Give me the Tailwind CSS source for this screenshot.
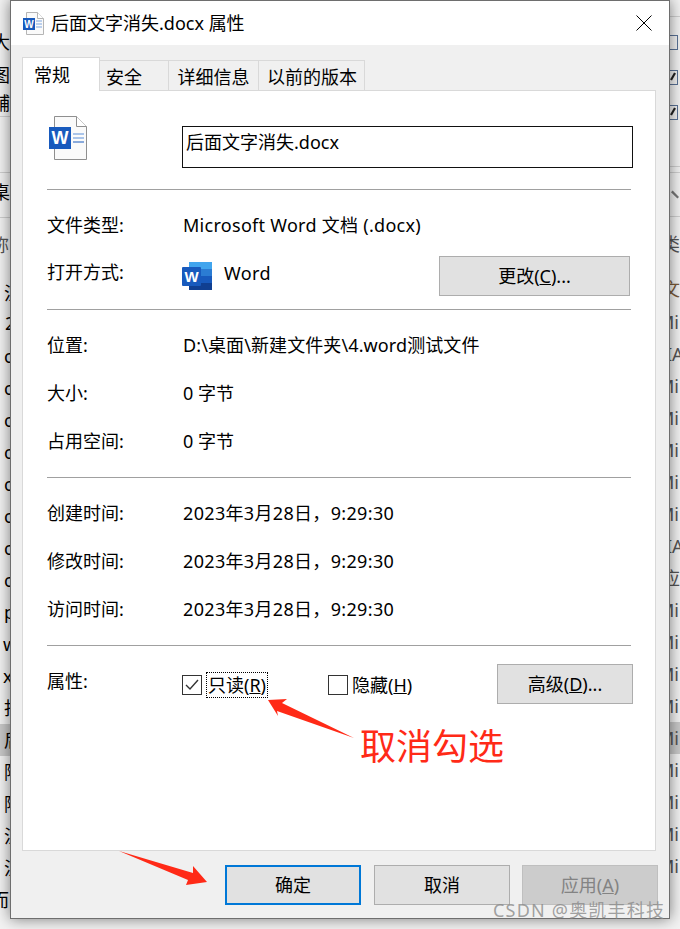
<!DOCTYPE html>
<html lang="zh-CN">
<head>
  <meta charset="UTF-8">
  <title>后面文字消失.docx 属性</title>
  <script src="https://cdn.jsdelivr.net/npm/@tailwindcss/browser@4"></script>
</head>
<body class="bg-[#f3f3f3]">
<div class="relative flex items-start w-[680px] h-[929px] overflow-hidden bg-[#f3f3f3] text-black text-[18px] leading-[24px] font-['Noto_Sans','Noto_Sans_CJK_SC',sans-serif]">

  <!-- window behind, left edge -->
  <div class="w-[10px] h-[929px] shrink-0 overflow-hidden flex flex-col whitespace-nowrap">
    <div class="h-[30px]"></div>
    <div class="h-[33px] -ml-[8px]">大</div>
    <div class="h-[28px] -ml-[8px]">图</div>
    <div class="h-[26px] -ml-[8px] border-b border-[#cfcfcf]">辅</div>
    <div class="h-[56px] border-b border-[#cfcfcf]"></div>
    <div class="h-[45px] -ml-[8px] pt-[7px] border-b border-[#cfcfcf]">桌</div>
    <div class="h-[63px] -ml-[9px] pt-[15px] text-[#555]">称</div>
    <div class="h-[30px] pl-[4px]">注</div>
    <div class="h-[29px] pl-[5px]">2</div>
    <div class="h-[32px] pl-[4px] pt-[4px]">c</div>
    <div class="h-[32px] pl-[4px] pt-[4px]">c</div>
    <div class="h-[32px] pl-[4px] pt-[4px]">c</div>
    <div class="h-[32px] pl-[4px] pt-[4px]">c</div>
    <div class="h-[32px] pl-[4px] pt-[4px]">c</div>
    <div class="h-[32px] pl-[4px] pt-[4px]">c</div>
    <div class="h-[32px] pl-[4px] pt-[4px]">c</div>
    <div class="h-[32px] pl-[4px] pt-[4px]">c</div>
    <div class="h-[32px] pl-[4px] pt-[4px]">p</div>
    <div class="h-[32px] pl-[3px] pt-[4px]">w</div>
    <div class="h-[32px] pl-[3px] pt-[4px]">x</div>
    <div class="h-[32px] pl-[4px] pt-[4px]">找</div>
    <div class="h-[32px] pl-[4px] pt-[4px] bg-[#c9c9c9]">后</div>
    <div class="h-[32px] pl-[4px] pt-[4px]">阿</div>
    <div class="h-[32px] pl-[4px] pt-[4px]">阿</div>
    <div class="h-[32px] pl-[4px] pt-[4px]">注</div>
    <div class="h-[32px] pl-[4px] pt-[4px]">注</div>
    <div class="h-[32px] -ml-[9px] pt-[4px]">而</div>
  </div>

  <!-- dialog -->
  <div class="relative z-10 w-[660px] h-[919px] shrink-0 flex flex-col border border-[#6e6e6e] bg-[#f0f0f0] shadow-[0_0_14px_rgba(0,0,0,0.5)]">
    <div class="h-[44px] shrink-0 bg-white flex items-center pl-[12px] pr-[17px]">
      <svg width="21" height="23" viewBox="0 0 21 23" class="mr-[7px]">
        <path d="M3.5 .5h11l6 6v16h-17z" fill="#fafafa" stroke="#b5b5b5"/>
        <path d="M14.5 .5v6h6" fill="#fff" stroke="#b5b5b5"/>
        <rect x="0" y="6" width="12" height="12" fill="#185abd"/>
        <text x="6" y="15.5" font-size="10" font-weight="700" fill="#fff" text-anchor="middle" font-family="Liberation Sans">W</text>
        <path d="M13 9h6M13 12h6M13 15h6" stroke="#7ea6e0"/>
      </svg>
      <span class="flex-1">后面文字消失.docx 属性</span>
      <svg width="16" height="16" viewBox="0 0 16 16"><path d="M.5.5l15 15M15.5.5l-15 15" stroke="#000" fill="none"/></svg>
    </div>

    <!-- tabs -->
    <div class="h-[45px] shrink-0 flex items-end pl-[11px]">
      <div class="relative z-10 h-[34px] -mb-[1px] w-[78px] bg-white border border-b-0 border-[#d9d9d9] pl-[11px] pt-[5px]">常规</div>
      <div class="h-[30px] w-[69px] bg-[#f0f0f0] border-t border-r border-[#d9d9d9] pl-[6px] pt-[4px]">安全</div>
      <div class="h-[30px] w-[90px] bg-[#f0f0f0] border-t border-r border-[#d9d9d9] text-center pt-[4px]">详细信息</div>
      <div class="h-[30px] w-[106px] bg-[#f0f0f0] border-t border-r border-[#d9d9d9] pl-[8px] pt-[4px]">以前的版本</div>
    </div>

    <!-- panel -->
    <div class="ml-[11px] w-[634px] h-[761px] shrink-0 bg-white border border-[#d9d9d9] px-[24px]">
      <div class="h-[98px] flex items-start">
        <svg width="40" height="45" viewBox="0 0 40 45" class="mt-[25px] ml-[2px] shrink-0">
          <path d="M5.5.5h22l10 10v33h-32z" fill="#fafafa" stroke="#8f8f8f"/>
          <path d="M27.5.5v10h10" fill="#fff" stroke="#8f8f8f"/>
          <rect x="0" y="11" width="22" height="22" fill="#185abd"/>
          <text x="11" y="28" font-size="18" font-weight="700" fill="#fff" text-anchor="middle" font-family="Liberation Sans">W</text>
          <path d="M24 18h11M24 22h11" stroke="#5b8fd9"/>
          <path d="M24 26h11" stroke="#185abd"/>
        </svg>
        <div class="ml-[93px] mt-[35px] w-[451px] h-[42px] shrink-0 border border-[#111] pl-[3px] pt-[3px]">后面文字消失.docx</div>
      </div>
      <div class="h-px bg-[#a0a0a0]"></div>

      <div class="pt-[11px] h-[119px]">
        <div class="h-[48px] flex items-center"><span class="w-[136px]">文件类型:</span><span class="tracking-[0.28px]">Microsoft Word 文档 (.docx)</span></div>
        <div class="h-[48px] flex items-center">
          <span class="w-[135px] -mt-[2px]">打开方式:</span>
          <svg width="30" height="28" viewBox="0 0 30 28" class="mr-[12px] mt-[6px]">
            <rect x="7" y="0" width="23" height="7" fill="#41a5ee"/>
            <rect x="7" y="7" width="23" height="7" fill="#2b7cd3"/>
            <rect x="7" y="14" width="23" height="7" fill="#185abd"/>
            <rect x="7" y="21" width="23" height="7" fill="#103f91"/>
            <rect x="0" y="5" width="19" height="19" rx="1" fill="#185abd"/>
            <text x="9.5" y="20" font-size="15" font-weight="700" fill="#fff" text-anchor="middle" font-family="Liberation Sans">W</text>
          </svg>
          <span class="flex-1 -mt-[1px] tracking-[0.4px]">Word</span>
          <div class="w-[191px] h-[40px] mr-[1px] mt-[6px] border border-[#adadad] bg-[#e1e1e1] flex items-center justify-center">更改(<u>C</u>)...</div>
        </div>
      </div>
      <div class="h-px bg-[#a0a0a0]"></div>

      <div class="pt-[11px] h-[167px]">
        <div class="h-[48px] flex items-center"><span class="w-[136px]">位置:</span><span class="tracking-[0.1px]">D:\桌面\新建文件夹\4.word测试文件</span></div>
        <div class="h-[48px] flex items-center"><span class="w-[136px]">大小:</span><span>0 字节</span></div>
        <div class="h-[48px] flex items-center"><span class="w-[136px]">占用空间:</span><span>0 字节</span></div>
      </div>
      <div class="h-px bg-[#a0a0a0]"></div>

      <div class="pt-[11px] h-[167px]">
        <div class="h-[48px] flex items-center"><span class="w-[136px]">创建时间:</span><span class="tracking-[0.33px]">2023年3月28日，9:29:30</span></div>
        <div class="h-[48px] flex items-center"><span class="w-[136px]">修改时间:</span><span class="tracking-[0.33px]">2023年3月28日，9:29:30</span></div>
        <div class="h-[48px] flex items-center"><span class="w-[136px]">访问时间:</span><span class="tracking-[0.33px]">2023年3月28日，9:29:30</span></div>
      </div>
      <div class="h-px bg-[#a0a0a0]"></div>

      <div class="flex items-start pt-[18px]">
        <span class="w-[135px] shrink-0 mt-[5px]">属性:</span>
        <div class="w-[20px] h-[20px] shrink-0 mt-[11px] border border-[#333] flex items-center justify-center">
          <svg width="14" height="12" viewBox="0 0 14 12"><path d="M1 6l4 4 8-9" stroke="#333" stroke-width="1.4" fill="none"/></svg>
        </div>
        <div class="ml-[4px] mt-[8px] w-[62px] h-[26px] shrink-0 outline-1 outline-dotted outline-black -outline-offset-1 flex items-center justify-center whitespace-nowrap">只读(<u>R</u>)</div>
        <div class="ml-[60px] w-[20px] h-[20px] mt-[11px] border border-[#333] shrink-0"></div>
        <div class="ml-[4px] mt-[9px] w-[145px] shrink-0 whitespace-nowrap">隐藏(<u>H</u>)</div>
        <div class="w-[136px] h-[40px] shrink-0 border border-[#adadad] bg-[#e1e1e1] flex items-center justify-center">高级(<u>D</u>)...</div>
      </div>
    </div>

    <!-- bottom buttons -->
    <div class="flex pl-[214px] gap-[13px] mt-[14px]">
      <div class="w-[136px] h-[40px] border-2 border-[#0078d7] bg-[#e1e1e1] flex items-center justify-center">确定</div>
      <div class="w-[136px] h-[40px] border border-[#adadad] bg-[#e1e1e1] flex items-center justify-center">取消</div>
      <div class="w-[136px] h-[40px] ml-[-1px] border border-[#bfbfbf] bg-[#cccccc] text-[#838383] flex items-center justify-center">应用(<u>A</u>)</div>
    </div>
  </div>

  <!-- window behind, right edge -->
  <div class="flex-1 h-[929px] overflow-hidden whitespace-nowrap flex flex-col text-[#555]">
    <div class="h-[17px] border-b border-[#d0d0d0]"></div>
    <div class="h-[18px]"></div>
    <div class="h-[15px] w-[8px] border border-l-0 border-[#5a7296]"></div>
    <div class="h-[20px]"></div>
    <div class="h-[15px] w-[8px] border border-l-0 border-[#5a7296]">
      <svg width="7" height="13" viewBox="0 0 7 13" class="block"><path d="M5 2L1 9" stroke="#222" stroke-width="2.2" fill="none"/></svg>
    </div>
    <div class="h-[20px]"></div>
    <div class="h-[15px] w-[8px] border border-l-0 border-[#5a7296]">
      <svg width="7" height="13" viewBox="0 0 7 13" class="block"><path d="M5 2L1 9" stroke="#222" stroke-width="2.2" fill="none"/></svg>
    </div>
    <div class="h-[47px] border-b border-[#d0d0d0]"></div>
    <div class="h-[6px] border-b border-[#d0d0d0]"></div>
    <div class="h-[44px] border-b border-[#d0d0d0] flex items-center">
      <svg width="11" height="12" viewBox="0 0 11 12"><path d="M2 2l7 7" stroke="#777" stroke-width="2.5" fill="none"/></svg>
    </div>
    <div class="h-[47px] pt-[15px] -ml-[8px]">类型</div>
    <div class="h-[37px] -ml-[8px] pt-[13px] text-[#7a5a3a]">文件</div>
    <div class="h-[5px]"></div>
    <div class="h-[32px] pt-[4px] -ml-[12px]">Mi</div>
    <div class="h-[32px] pt-[4px] -ml-[4px]">IA</div>
    <div class="h-[32px] pt-[4px] -ml-[12px]">Mi</div>
    <div class="h-[32px] pt-[4px] -ml-[12px]">Mi</div>
    <div class="h-[32px] pt-[4px] -ml-[12px]">Mi</div>
    <div class="h-[32px] pt-[4px] -ml-[12px]">Mi</div>
    <div class="h-[32px] pt-[4px] -ml-[12px]">Mi</div>
    <div class="h-[32px] pt-[4px] -ml-[4px]">IA</div>
    <div class="h-[32px] pt-[4px] -ml-[8px]">应用</div>
    <div class="h-[32px] pt-[4px] -ml-[12px]">Mi</div>
    <div class="h-[32px] pt-[4px] -ml-[12px]">Mi</div>
    <div class="h-[32px] pt-[4px] -ml-[12px]">Mi</div>
    <div class="h-[32px] pt-[4px] -ml-[12px]">Mi</div>
    <div class="h-[32px] pt-[4px] pl-[12px] -ml-[12px] bg-[#c9c9c9]"><span class="-ml-[12px]">Mi</span></div>
    <div class="h-[32px] pt-[4px] -ml-[12px]">Mi</div>
    <div class="h-[32px] pt-[4px] -ml-[12px]">Mi</div>
    <div class="h-[32px] pt-[4px] -ml-[12px]">Mi</div>
    <div class="h-[32px] pt-[4px] -ml-[12px]">Mi</div>
  </div>

  <!-- annotations drawn over the screenshot -->
  <svg class="absolute left-0 top-0 z-20 pointer-events-none" width="680" height="929" viewBox="0 0 680 929">
    <polygon points="268,700 287,699 282,703 354,738 277,711 278,716" fill="#ff2a17"/>
    <polygon points="119,851 193,873 193,866 207,882 186,885 188,880" fill="#ff2a17"/>
  </svg>
  <div class="absolute z-20 left-[360px] top-[724px] text-[36px] leading-[46px] text-[#ff2a17]">取消勾选</div>
  <div class="absolute z-20 left-[493px] top-[898px] text-[18px] leading-[24px] text-[#8a8a8a]/80 tracking-[1.2px]">CSDN @奥凯丰科技</div>
</div>
</body>
</html>
